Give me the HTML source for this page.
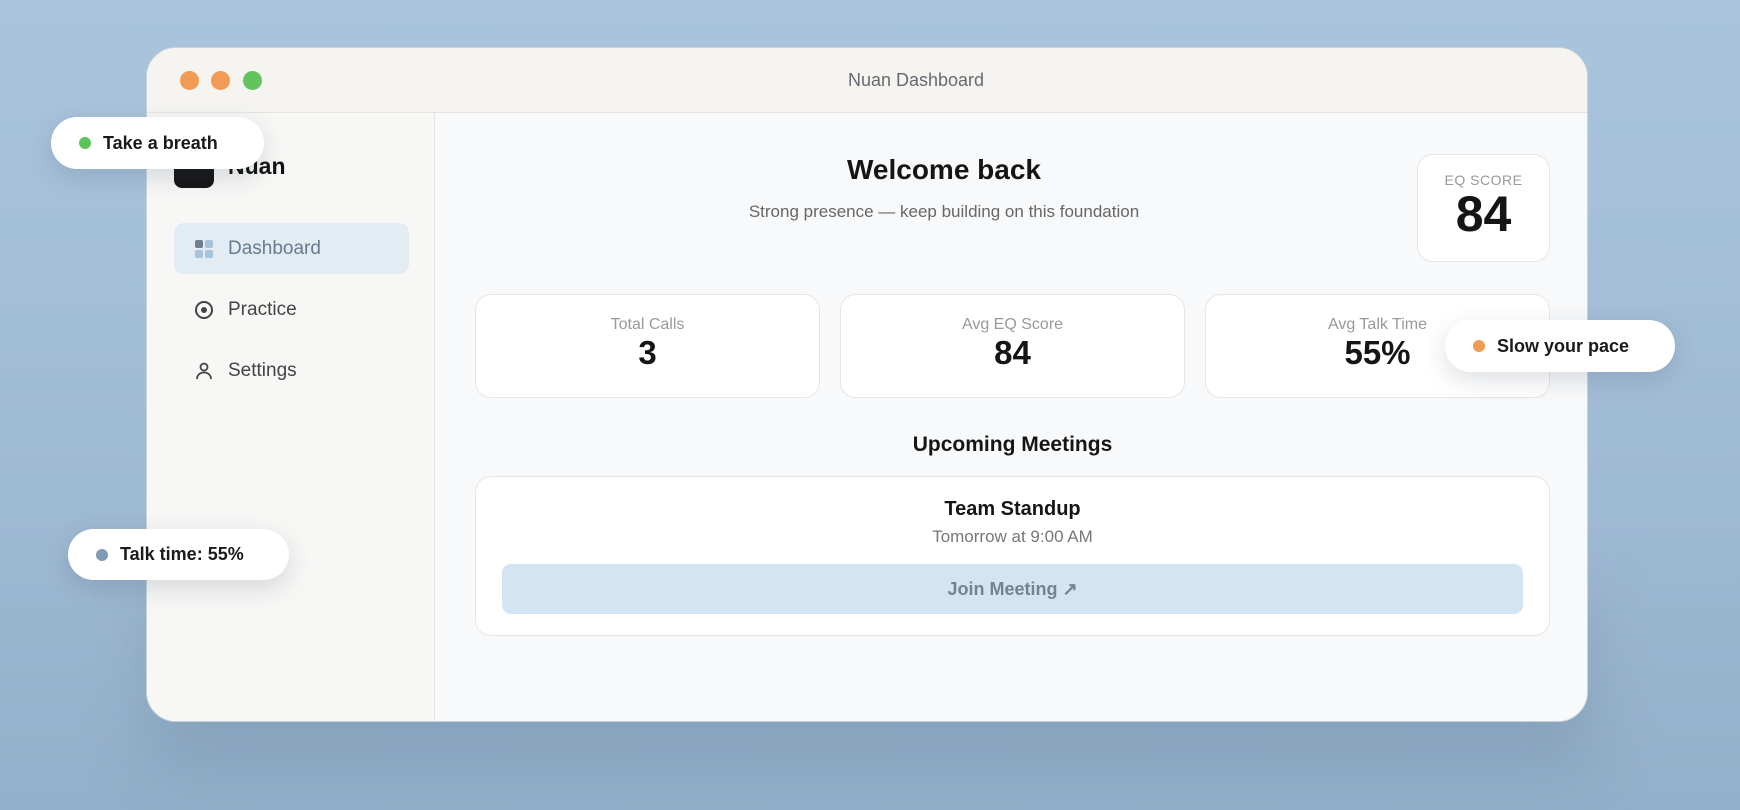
<!DOCTYPE html>
<html><head><meta charset="utf-8"><style>
*{box-sizing:border-box;margin:0;padding:0}
body{width:1740px;height:810px;overflow:hidden;font-family:"Liberation Sans",sans-serif;background:linear-gradient(180deg,#a9c4dc 0%,#9fbad3 60%,#93afc9 100%);position:relative}
.shadow{position:absolute;left:150px;top:600px;width:1440px;height:170px;background:rgba(110,135,160,.35);filter:blur(30px)}
.win{position:absolute;left:146px;top:47px;width:1442px;height:675px;border-radius:30px;overflow:hidden;background:#f8f9fa;border:1px solid #c9d3dc}
.title{height:65px;background:#f5f4f1;border-bottom:1px solid #e6e4e0;position:relative}
.dot{position:absolute;top:23px;width:19px;height:19px;border-radius:50%}
.title .t{position:absolute;left:669px;width:200px;text-align:center;top:22px;font-size:18px;color:#666a70}
.side{position:absolute;left:0;top:65px;width:288px;bottom:0;background:#f7f7f5;border-right:1px solid #e6e6e4}
.logo{position:absolute;left:27px;top:35px;width:40px;height:40px;border-radius:8px;background:#151515}
.brand{position:absolute;left:81px;top:40px;font-size:23px;font-weight:bold;color:#111}
.nav{position:absolute;left:27px;width:235px;height:51px;border-radius:10px;font-size:19px;color:#444;display:flex;align-items:center;padding-left:20px;gap:14px}
.nav svg{width:20px;height:20px}
.main{position:absolute;left:289px;top:65px;right:0;bottom:0}
.card{position:absolute;background:#fff;border:1px solid #e6e6e6;border-radius:16px;text-align:center}
.lbl{font-size:16px;color:#999}
.val{font-size:33px;font-weight:bold;color:#151515}
.pill{position:absolute;background:#fff;border-radius:26px;box-shadow:0 8px 24px rgba(60,80,100,.18);display:flex;align-items:center;font-size:18px;font-weight:bold;color:#1a1a1a;padding-left:28px;gap:12px}
.pill i{width:12px;height:12px;border-radius:50%;display:block}
</style></head><body>
<div class="shadow"></div>
<div class="win">
 <div class="title">
  <div class="dot" style="left:33px;background:#f29b55"></div>
  <div class="dot" style="left:64px;background:#f29b55"></div>
  <div class="dot" style="left:96px;background:#62c45c"></div>
  <div class="t">Nuan Dashboard</div>
 </div>
 <div class="side">
  <div class="logo"></div>
  <div class="brand">Nuan</div>
  <div class="nav" style="top:110px;background:#e3ebf3;color:#667c92"><svg viewBox="0 0 20 20"><rect x="1" y="1" width="8" height="8" rx="2" fill="#6f7f8f"/><rect x="11" y="1" width="8" height="8" rx="2" fill="#a7c3dc"/><rect x="1" y="11" width="8" height="8" rx="2" fill="#a7c3dc"/><rect x="11" y="11" width="8" height="8" rx="2" fill="#a7c3dc"/></svg>Dashboard</div>
  <div class="nav" style="top:171px"><svg viewBox="0 0 20 20"><circle cx="10" cy="10" r="8" fill="none" stroke="#444" stroke-width="2"/><circle cx="10" cy="10" r="3" fill="#444"/></svg>Practice</div>
  <div class="nav" style="top:232px"><svg viewBox="0 0 20 20" fill="none" stroke="#444" stroke-width="1.8"><circle cx="10" cy="6" r="3.5"/><path d="M3 18c0-4 3-6.5 7-6.5s7 2.5 7 6.5"/></svg>Settings</div>
 </div>
 <div class="main">
  <div style="position:absolute;left:39px;width:938px;top:41px;text-align:center;font-size:28px;font-weight:bold;color:#151515">Welcome back</div>
  <div style="position:absolute;left:39px;width:938px;top:89px;text-align:center;font-size:17px;color:#666">Strong presence — keep building on this foundation</div>
  <div class="card" style="left:981px;top:41px;width:133px;height:108px"><div class="lbl" style="font-size:14px;letter-spacing:.5px;margin-top:17px">EQ SCORE</div><div class="val" style="font-size:50px;line-height:52px">84</div></div>
  <div class="card" style="left:39px;top:181px;width:345px;height:104px"><div class="lbl" style="margin-top:21px">Total Calls</div><div class="val">3</div></div>
  <div class="card" style="left:404px;top:181px;width:345px;height:104px"><div class="lbl" style="margin-top:21px">Avg EQ Score</div><div class="val">84</div></div>
  <div class="card" style="left:769px;top:181px;width:345px;height:104px"><div class="lbl" style="margin-top:21px">Avg Talk Time</div><div class="val">55%</div></div>
  <div style="position:absolute;left:39px;width:1075px;top:320px;text-align:center;font-size:21px;font-weight:bold;color:#151515">Upcoming Meetings</div>
  <div class="card" style="left:39px;top:363px;width:1075px;height:160px">
   <div style="font-size:20px;font-weight:bold;color:#151515;margin-top:21px">Team Standup</div>
   <div style="font-size:17px;color:#777;margin-top:6px">Tomorrow at 9:00 AM</div>
   <div style="position:absolute;left:26px;right:26px;top:87px;height:50px;border-radius:9px;background:#d3e5f2;color:#738392;font-size:18px;font-weight:bold;line-height:50px">Join Meeting ↗</div>
  </div>
 </div>
</div>
<div class="pill" style="left:51px;top:117px;width:213px;height:52px"><i style="background:#5cc55a"></i>Take a breath</div>
<div class="pill" style="left:1445px;top:320px;width:230px;height:52px"><i style="background:#f29b55"></i>Slow your pace</div>
<div class="pill" style="left:68px;top:529px;width:221px;height:51px"><i style="background:#7f9ab3"></i>Talk time: 55%</div>
</body></html>
